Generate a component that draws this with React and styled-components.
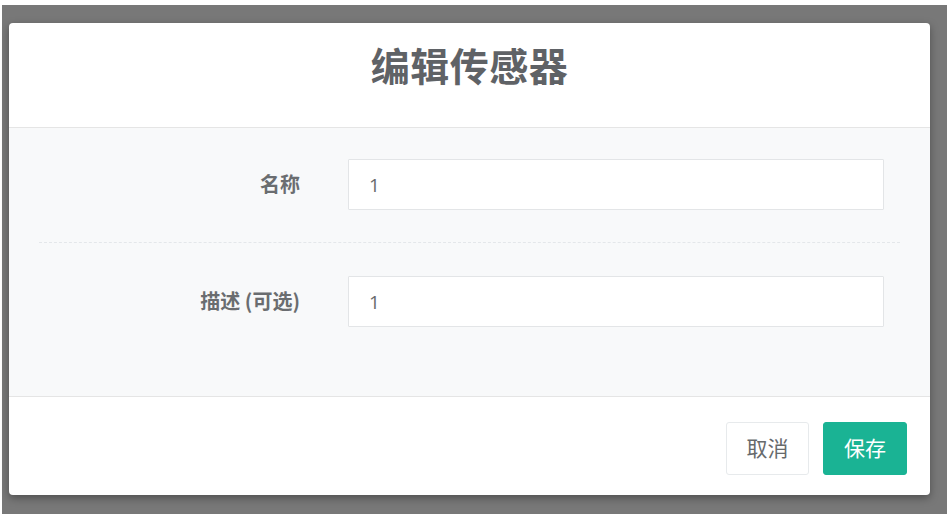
import React from 'react'
import styled, { createGlobalStyle } from 'styled-components'

const GlobalStyle = createGlobalStyle`
  html, body {
    margin: 0;
    padding: 0;
    background: #ffffff;
    font-family: "Noto Sans CJK SC", "Open Sans", "Liberation Sans", sans-serif;
  }
`

const Page = styled.div`
  width: 947px;
  height: 520px;
  padding-top: 5px;
  box-sizing: border-box;
  background: #ffffff;
  overflow: hidden;
`

const Backdrop = styled.div`
  height: 509px;
  margin-left: 2px;
  padding: 18px 17px 0 7px;
  box-sizing: border-box;
  background: #787878;
`

const Modal = styled.div`
  width: 921px;
  height: 472px;
  display: flex;
  flex-direction: column;
  background: #ffffff;
  border-radius: 4px;
  box-shadow: 0 3px 9px rgba(0, 0, 0, 0.35);
  overflow: hidden;
`

const Header = styled.div`
  height: 105px;
  flex-shrink: 0;
  box-sizing: border-box;
  padding-bottom: 21px;
  display: flex;
  align-items: center;
  justify-content: center;
  border-bottom: 1px solid #e5e5e5;
`

const Title = styled.h4`
  margin: 0;
  font-size: 39px;
  line-height: 1.2;
  font-weight: 700;
  color: #5f6266;
  letter-spacing: 0.5px;
`

const Body = styled.div`
  flex: 1;
  background: #f8f9fa;
  padding: 31px 30px 0 30px;
`

const Row = styled.div`
  display: flex;
  align-items: center;
  gap: 48px;
`

const Label = styled.label`
  width: 261px;
  text-align: right;
  font-size: 20px;
  font-weight: 700;
  color: #6a6d70;
  margin-top: -3px;
`

const Input = styled.input`
  width: 536px;
  height: 51px;
  box-sizing: border-box;
  border: 1px solid #e3e5e7;
  border-radius: 1px;
  background: #ffffff;
  padding: 0 20px;
  font-family: "Open Sans", "Liberation Sans", sans-serif;
  font-size: 19px;
  color: #676a6c;
  outline: none;
`

const Dashed = styled.div`
  height: 0;
  border-top: 1px dashed #e4e7ea;
  margin: 32px 0 33px 0;
`

const Footer = styled.div`
  height: 99px;
  flex-shrink: 0;
  border-top: 1px solid #e5e5e5;
  display: flex;
  justify-content: flex-end;
  align-items: flex-start;
  gap: 14px;
  padding: 25px 23px 0 0;
  box-sizing: border-box;
`

const Button = styled.button`
  width: ${p => (p.primary ? '84px' : '83px')};
  height: 53px;
  padding: 0 0 3px 0;
  border-radius: 3px;
  border: 1px solid ${p => (p.primary ? '#1ab394' : '#e7eaec')};
  background: ${p => (p.primary ? '#1ab394' : '#ffffff')};
  color: ${p => (p.primary ? '#ffffff' : '#676a6c')};
  font-family: "Noto Sans CJK SC", sans-serif;
  font-size: 21px;
  cursor: pointer;
`

const App = () => {
  return (
    <Page>
      <GlobalStyle />
      <Backdrop>
        <Modal>
          <Header>
            <Title>编辑传感器</Title>
          </Header>
          <Body>
            <Row>
              <Label>名称</Label>
              <Input defaultValue="1" />
            </Row>
            <Dashed />
            <Row>
              <Label>描述 (可选)</Label>
              <Input defaultValue="1" />
            </Row>
          </Body>
          <Footer>
            <Button>取消</Button>
            <Button primary>保存</Button>
          </Footer>
        </Modal>
      </Backdrop>
    </Page>
  )
}

export default App
